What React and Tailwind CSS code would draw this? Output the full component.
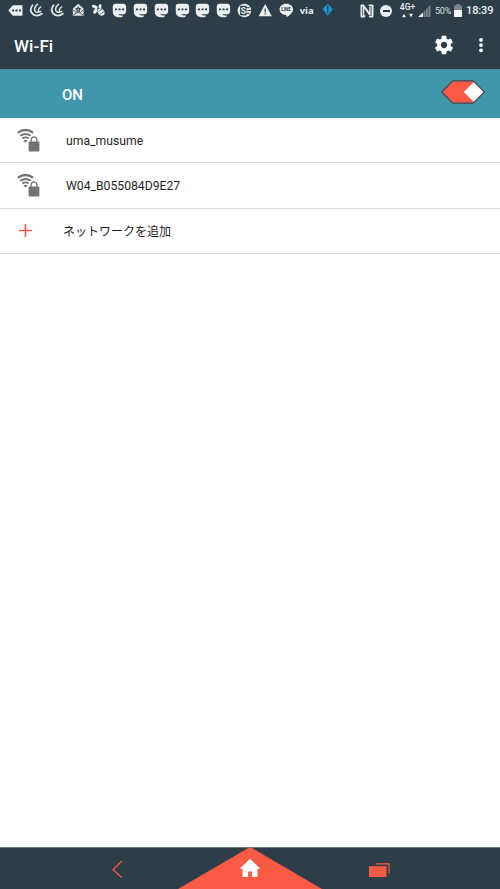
import React from 'react';

const MessageTag = () => (
  <svg width="21" height="21" viewBox="0 0 21 21" fill="#eceff0">
    <path d="M8 5.2h9.6v10.6H8L3.2 10.6z" />
    <path d="M7.2 9.6h2v1.8h-2zM10.6 9.6h2v1.8h-2zM14 9.6h2v1.8h-2z" fill="#2d3e48" />
  </svg>
);

// three prongs that meet in a curved base
const Claw = () => (
  <svg width="21" height="21" viewBox="0 0 21 21" fill="none" stroke="#e3e7e8" strokeLinecap="round">
    <path d="M6.6 5.2C4.4 8 4.4 11.2 6.2 13.4c2 2.6 6 3 9.8.4" strokeWidth="1.8" />
    <path d="M11.6 4.2C9 6.6 8 9 9.2 11.2c.8 1.2 2 1.4 3.4 1" strokeWidth="1.5" />
    <path d="M15 6.8c-2 1.4-3 3-2.4 4.8.6.6 1.4.4 2.4-.2" strokeWidth="1.3" />
  </svg>
);

const StarMail = () => (
  <svg width="21" height="21" viewBox="0 0 21 21">
    <path d="m10.3 3.8 5.4 4.8v7.2H4.9V8.6z" fill="#dfe4e5" />
    <path d="m10.3 6 1 2 2.2.4-1.6 1.5.3 2.3-1.9-1-1.9 1 .3-2.3-1.6-1.5 2.2-.4z" fill="#2d3e48" />
    <path d="m5 9.6 3 2.8M15.6 9.6l-3 2.8M5.2 15.4l3.6-2.8h3l3.6 2.8" fill="none" stroke="#2d3e48" strokeWidth=".8" />
    <circle cx="10.3" cy="9.6" r=".8" fill="#dfe4e5" />
  </svg>
);

const Bee = () => (
  <svg width="21" height="21" viewBox="0 0 21 21" fill="#eceff0">
    <ellipse cx="6.8" cy="6.8" rx="3.2" ry="1.7" transform="rotate(24 6.8 6.8)" />
    <ellipse cx="12.2" cy="6.2" rx="1.5" ry="2.2" transform="rotate(12 12.2 6.2)" />
    <ellipse cx="7.4" cy="11.2" rx="2.9" ry="1.7" transform="rotate(-56 7.4 11.2)" />
    <ellipse cx="13.2" cy="12" rx="4" ry="3" transform="rotate(50 13.2 12)" />
    <path d="m10.4 11.6 4-2.6M12 14.4l4.2-2.8" stroke="#2d3e48" strokeWidth=".7" />
  </svg>
);

const Mastodon = () => (
  <svg width="21" height="21" viewBox="0 0 21 21" fill="#eceff0">
    <path d="M6.6 3.6h7.8c1.8 0 2.9 1.3 2.9 3v4.6c0 2-1.3 3.2-3 3.2H9.4c.6 1 2 1.3 4.4.8v1.5c-1.2.6-2.8.8-4.4.6-4-.3-5.6-2.6-5.6-6.5V6.6c0-1.7 1.1-3 2.8-3z" />
    <path d="M6 8.4h2v1.9H6zM9.6 8.4h2v1.9h-2zM13.2 8.4h2v1.9h-2z" fill="#2d3e48" />
  </svg>
);

const NewsBadge = () => (
  <svg width="21" height="21" viewBox="0 0 21 21">
    <circle cx="10.5" cy="10.5" r="6.9" fill="#e8ecec" />
    <rect x="6.2" y="5.8" width="6.4" height="9.6" fill="#2d3e48" />
    <path d="M12 7.6h3.6M13.4 10.5H18M12 13.4h3.6" stroke="#2d3e48" strokeWidth="1" />
    <text x="6.9" y="13.6" fontSize="8.6" fontWeight="700" fill="#e8ecec" fontFamily="Roboto">S</text>
  </svg>
);

const Warning = () => (
  <svg width="21" height="21" viewBox="0 0 21 21">
    <path d="M10.3 4 17 16.4H3.6z" fill="#eceff0" />
    <path d="M10.3 8.6v3.8M10.3 13.2v1.4" stroke="#2d3e48" strokeWidth="1.2" />
  </svg>
);

const Line = () => (
  <svg width="21" height="21" viewBox="0 0 21 21">
    <path d="M10.4 3.8c3.8 0 6.8 2.4 6.8 5.6 0 3-3.3 5.8-6.8 8 .3-1.2.2-2.2-.5-2.4-3.6-.3-6.3-2.6-6.3-5.6 0-3.2 3-5.6 6.8-5.6z" fill="#eceff0" />
    <text x="5.3" y="11.3" fontSize="4.6" fontWeight="700" fill="#2d3e48" fontFamily="Roboto">LINE</text>
  </svg>
);

const BlueDiamond = () => (
  <svg width="21" height="21" viewBox="0 0 21 21">
    <path d="m10.8 3.6 5.2 5.5-5.2 6.8-5.2-6.8z" fill="#199ad6" />
    <path d="M10.8 5.8v4.6M10.8 11.2v1.8" stroke="#12384f" strokeWidth="1.4" />
  </svg>
);

const Nfc = () => (
  <svg width="14" height="14" viewBox="0 0 14 14">
    <path d="M1.5.5h2.3l5.4 7.6V2.6h1.5v9h-1.4L4.2 4.4v7.2H6l-1.4 1.9H1.5q-1 0-1-1v-11q0-1 1-1z" fill="#e8ecec" />
    <path d="M8.6.5h3.9q1 0 1 1v11q0 1-1 1h-2.8l-1.2-1.6h3V2H8.6z" fill="#e8ecec" />
    <path d="M2.5 2.4v9.4" stroke="#2d3e48" strokeWidth=".7" />
  </svg>
);

const Signal = () => (
  <svg width="13" height="12" viewBox="0 0 13 12">
    <path d="M0 12 5 7.4V12z" fill="#eceff0" />
    <path d="M5.6 6.8 7.4 5v7H5.6zM8 4.4l1.8-1.8V12H8zM10.4 2l2-2v12h-2z" fill="#7b868c" />
  </svg>
);

const Battery = () => (
  <svg width="8" height="13" viewBox="0 0 8 13">
    <path d="M2.4 0h3.2v1.4H8V6H0V1.4h2.4z" fill="#7b868c" />
    <path d="M0 6h8v7H0z" fill="#f3f5f5" />
  </svg>
);

const notifications = [
  MessageTag, Claw, Claw, StarMail, Bee,
  Mastodon, Mastodon, Mastodon, Mastodon, Mastodon, Mastodon,
  NewsBadge, Warning, Line,
];

const StatusBar = () => (
  <div className="flex h-[22px] items-start text-[#eceff0]">
    <div className="flex pl-[5.2px]">
      {notifications.map((Icon, i) => (
        <span key={i} className="flex w-[20.8px] justify-center">
          <Icon />
        </span>
      ))}
      <span className="w-[20.8px] text-center font-['Open_Sans',sans-serif] text-[9.5px] leading-[21px] font-bold">via</span>
      <span className="flex w-[20.8px] justify-center"><BlueDiamond /></span>
    </div>
    <div className="ml-auto flex h-[21px] items-center pr-[7px]">
      <Nfc />
      <span className="ml-[6px] flex size-3 items-center justify-center rounded-full bg-[#eceff0]">
        <span className="h-[2px] w-[7px] bg-[#2d3e48]" />
      </span>
      <span className="ml-[8px] flex w-[15px] flex-col items-center">
        <span className="text-[8.5px] leading-[9px] font-medium">4G+</span>
        <svg width="11" height="5" viewBox="0 0 11 5" fill="#eceff0" className="mt-px">
          <path d="M0 4.2 2 .8l2 3.4zM7 .8h4L9 4.2z" />
        </svg>
      </span>
      <span className="ml-[3px]"><Signal /></span>
      <span className="ml-[4px] w-[17px] pt-[2px] text-[9px] tracking-[-0.2px] text-[#dde2e3]">50%</span>
      <span className="ml-[2px]"><Battery /></span>
      <span className="ml-[4px] w-[27px] pt-[2px] text-[11px] font-medium tracking-[-0.1px] whitespace-nowrap">18:39</span>
    </div>
  </div>
);

const SecuredWifi = () => (
  <svg width="24" height="24" viewBox="0 0 24 24" fill="none" stroke="#737373">
    <path d="M.9 4.8Q8.5-.6 16.1 4.8" strokeWidth="2.4" />
    <path d="M3.2 7.8q5.3-3.7 10.6 0" strokeWidth="2" />
    <path d="M5.3 10.5q3.2-2.3 6.4 0" strokeWidth="1.8" />
    <path d="M6.4 12.3q2.1-1.3 4.2 0l-2.1 2.5z" fill="#737373" stroke="none" />
    <path d="M14.1 14v-2.2a2.9 2.9 0 0 1 5.8 0V14" strokeWidth="1.3" />
    <rect x="11.6" y="13.4" width="10.8" height="10.2" rx="1" fill="#737373" stroke="none" />
  </svg>
);

const networks = ['uma_musume', 'W04_B055084D9E27'];

const App = () => {
  return (
    <div className="flex h-[889px] w-[500px] flex-col overflow-hidden bg-white font-[Roboto,'Noto_Sans_CJK_JP',sans-serif]">
      <header className="h-[69px] bg-[#2d3e48]">
        <StatusBar />
        <div className="flex h-[46px] items-center pr-[13px] pl-[14px] text-white">
          <h1 className="pt-px text-[17px] leading-5 font-medium tracking-[0.1px]">Wi-Fi</h1>
          <svg className="ml-auto" width="22" height="22" viewBox="0 0 24 24" fill="#fff">
            <path d="M19.43 12.98c.04-.32.07-.64.07-.98s-.03-.66-.07-.98l2.11-1.65c.19-.15.24-.42.12-.64l-2-3.46c-.12-.22-.39-.3-.61-.22l-2.49 1c-.52-.4-1.08-.73-1.69-.98l-.38-2.65A.488.488 0 0 0 14 2h-4c-.25 0-.46.18-.49.42l-.38 2.65c-.61.25-1.17.59-1.69.98l-2.49-1c-.23-.09-.49 0-.61.22l-2 3.46c-.13.22-.07.49.12.64l2.11 1.65c-.04.32-.07.65-.07.98s.03.66.07.98l-2.11 1.65c-.19.15-.24.42-.12.64l2 3.46c.12.22.39.3.61.22l2.49-1c.52.4 1.08.73 1.69.98l.38 2.65c.03.24.24.42.49.42h4c.25 0 .46-.18.49-.42l.38-2.65c.61-.25 1.17-.59 1.69-.98l2.49 1c.23.09.49 0 .61-.22l2-3.46c.12-.22.07-.49-.12-.64l-2.11-1.65zM12 15.5c-1.93 0-3.5-1.57-3.5-3.5s1.57-3.5 3.5-3.5 3.5 1.57 3.5 3.5-1.57 3.5-3.5 3.5z" />
          </svg>
          <svg className="ml-[20px]" width="12" height="20" viewBox="0 0 12 20" fill="#fff">
            <circle cx="6" cy="4.9" r="1.9" />
            <circle cx="6" cy="10.1" r="1.9" />
            <circle cx="6" cy="15.3" r="1.9" />
          </svg>
        </div>
      </header>

      <div className="flex h-[49px] items-center border-t border-[#4b8b9b] bg-[#4097ac] pr-[14px] pl-[62px]">
        <span className="pt-[2px] text-[15px] font-medium text-white">ON</span>
        <svg className="mb-[4px] ml-auto" width="46" height="26" viewBox="0 0 46 26">
          <path d="M1.7 13 12.9 1.8h20.4L44.4 13 33.3 24.2H12.9z" fill="#fb5a45" stroke="#384b55" strokeWidth="1.2" />
          <path d="m33.6 3.2 9.8 9.8-9.8 9.8L23.8 13z" fill="#fff" />
        </svg>
      </div>

      <main className="flex-1">
        {networks.map((name) => (
          <div key={name} className="flex h-[45.3px] items-center border-b border-[#dedede] pl-[17px]">
            <SecuredWifi />
            <span className="ml-[25px] pt-[2px] text-[12.2px] text-[#1f1f1f]">{name}</span>
          </div>
        ))}
        <div className="flex h-[45.3px] items-center border-b border-[#dedede] pl-[19px]">
          <svg width="13" height="13" viewBox="0 0 13 13" stroke="#fb5a45" strokeWidth="1.6">
            <path d="M6.5 0v13M0 6.5h13" />
          </svg>
          <span className="ml-[31px] pt-[2px] text-[12px] text-[#1f1f1f]">ネットワークを追加</span>
        </div>
      </main>

      <nav className="flex h-[42px] items-end border-t border-[#6d7a82] bg-[#2d3e48]">
        <div className="flex h-[41px] w-[178px] items-center pl-[111px]">
          <svg width="13" height="18" viewBox="0 0 13 18" fill="none" stroke="#fb5a45" strokeWidth="1.3">
            <path d="M10.7 1.3 2 9.7l8.7 7.8" />
          </svg>
        </div>
        <svg width="144" height="42" viewBox="0 0 144 42">
          <path d="M72 0 144 42H0z" fill="#fb5a45" />
          <path d="m72 11.7 10.3 10.1h-2.8v8.2h-5.6v-5.6h-3.8V30h-5.6v-8.2h-2.8z" fill="#fff" />
        </svg>
        <div className="flex h-[41px] flex-1 items-center pl-[47px]">
          <svg width="21" height="15" viewBox="0 0 21 15" className="mt-[3px]">
            <path d="M0 3.2h17.5V14H0z" fill="#fb5a45" />
            <path d="M6.8.8H20v9.4" fill="none" stroke="#fb5a45" strokeWidth="1.2" />
          </svg>
        </div>
      </nav>
    </div>
  );
};

export default App;
